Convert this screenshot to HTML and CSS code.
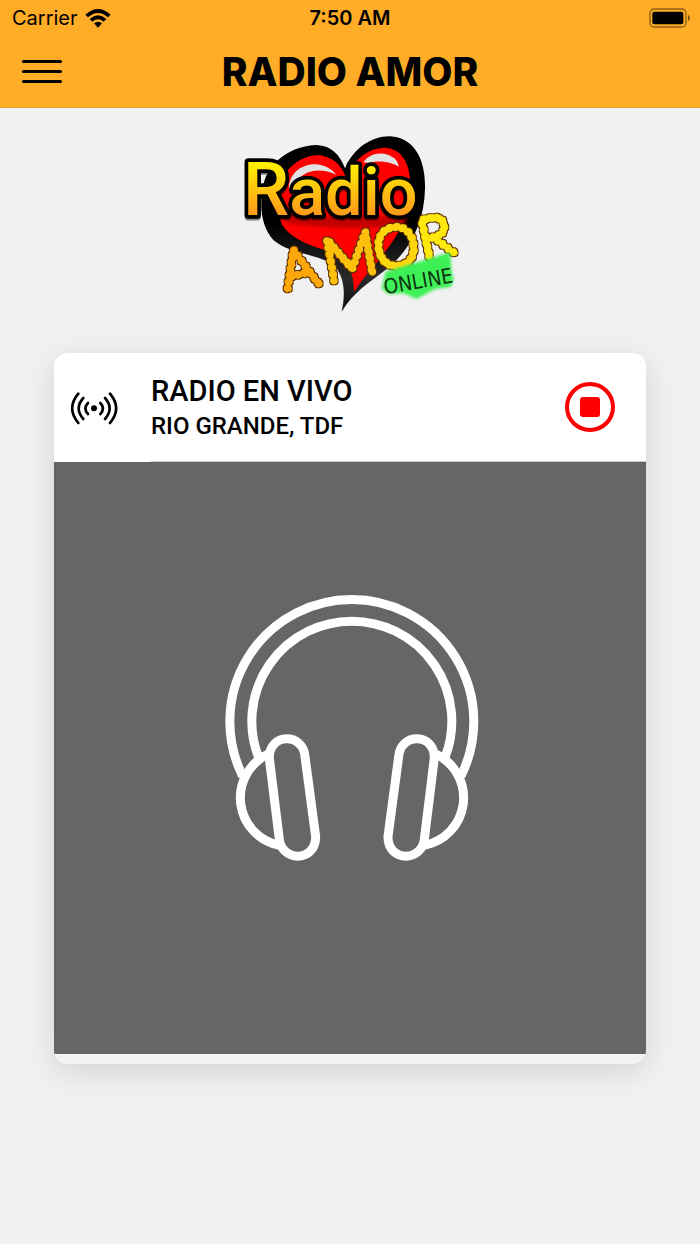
FILE: index.html
```html
<!DOCTYPE html>
<html lang="es">
<head>
    <meta charset="UTF-8">
    <meta name="viewport" content="width=device-width, initial-scale=1.0">
    <title>Radio Amor</title>
    <link rel="stylesheet" href="styles.css">
</head>
<body>

    <header class="header">
        <div class="status-bar">
            <div class="carrier">
                <span>Carrier</span>
                <svg class="wifi" viewBox="0 0 78 57" aria-hidden="true">
                    <path d="M1 17 Q39 -17 77 17 L69 25 Q39 -1 9 25 Z"/>
                    <path d="M14 30 Q39 8 64 30 L56 38 Q39 24 22 38 Z"/>
                    <path d="M27 43 Q39 33 51 43 L39 56 Z"/>
                </svg>
            </div>
            <span class="time">7:50 AM</span>
            <svg class="battery" viewBox="0 0 126 60" aria-hidden="true">
                <rect x="3" y="3" width="108" height="54" rx="13" fill="none" stroke="#000" stroke-opacity=".45" stroke-width="4"/>
                <rect x="10" y="11" width="93" height="38" rx="6"/>
                <path d="M117 20 Q123 24 123 30 Q123 36 117 40 Z" fill-opacity=".5"/>
            </svg>
        </div>
        <div class="toolbar">
            <button class="menu-btn" type="button" aria-label="Menu">
                <span></span>
                <span></span>
                <span></span>
            </button>
            <h1>RADIO AMOR</h1>
        </div>
    </header>

    <main>
        <!-- Station logo -->
        <svg class="logo" viewBox="0 0 690 585" role="img" aria-label="Radio Amor Online">
            <defs>
                <linearGradient id="gold" x1="0" y1="0" x2="0" y2="1">
                    <stop offset="0.2" stop-color="#fff000"/>
                    <stop offset="0.6" stop-color="#ffb414"/>
                    <stop offset="0.9" stop-color="#ff8a1c"/>
                </linearGradient>
                <linearGradient id="rim" x1="0" y1="0" x2="0" y2="1">
                    <stop offset="0.5" stop-color="#000"/>
                    <stop offset="0.8" stop-color="#2a2a2a"/>
                    <stop offset="1" stop-color="#111"/>
                </linearGradient>
                <filter id="soft" x="-20%" y="-30%" width="140%" height="160%">
                    <feGaussianBlur stdDeviation="5"/>
                </filter>
                <!-- brown edge behind the beads -->
                <filter id="edge" x="-10%" y="-10%" width="120%" height="120%">
                    <feMorphology in="SourceAlpha" operator="dilate" radius="4" result="fat"/>
                    <feFlood flood-color="#5a2c00"/>
                    <feComposite in2="fat" operator="in" result="brown"/>
                    <feMerge>
                        <feMergeNode in="brown"/>
                        <feMergeNode in="SourceGraphic"/>
                    </feMerge>
                </filter>
            </defs>

            <!-- heart -->
            <path fill="url(#rim)" d="M330 130 C355 70 410 33 465 34 C535 37 572 100 570 190 C568 300 520 380 455 432 C405 472 355 500 320 560 C332 505 330 450 290 415 C235 385 160 385 115 345 C78 305 72 240 85 180 C100 110 170 62 245 60 C290 62 315 90 330 130 Z"/>
            <path fill="#f00" d="M335 165 C350 110 395 68 450 68 C510 72 530 130 525 200 C518 300 470 355 435 400 C410 435 385 455 357 502 C358 450 340 405 300 385 C240 365 175 350 142 300 C118 250 115 190 150 145 C180 105 225 85 262 92 C305 102 325 130 335 165 Z"/>
            <path fill="#a00000" opacity=".6" filter="url(#soft)" d="M150 275 H520 L510 300 Q320 320 155 295 Z"/>
            <path fill="#e2e2e2" d="M162 192 C160 150 195 118 240 118 C270 119 290 132 303 149 C270 134 235 132 208 148 C190 160 175 176 172 192 Z"/>
            <path fill="#e2e2e2" d="M385 112 C400 90 425 82 450 87 C475 93 489 105 491 125 C470 112 435 104 402 114 Z"/>

            <!-- lettering -->
            <text class="logo-radio" x="24" y="271"><tspan class="logo-cap">R</tspan>adio</text>
            <g class="logo-amor" filter="url(#edge)">
                <text stroke="#ffa80c" transform="translate(152 500) rotate(-14)">A</text>
                <text class="wide" stroke="#ffc00e" transform="translate(276 470) rotate(-10)">M</text>
                <text stroke="#ffd60e" transform="translate(428 432) rotate(-9)">O</text>
                <text stroke="#ffe80e" transform="translate(564 402) rotate(-12)">R</text>
            </g>
            <path fill="#3cf055" filter="url(#soft)" d="M440 490 L452 440 L500 425 L560 408 L645 382 L650 440 L656 462 L648 486 L600 492 L545 522 L505 505 L460 508 Z"/>
            <text class="logo-online" transform="translate(450 508) rotate(-10)">ONLINE</text>
        </svg>

        <section class="card">
            <div class="card-header">
                <svg class="live" viewBox="90 150 144 108" aria-hidden="true">
                    <circle cx="162" cy="205" r="9"/>
                    <g fill="none" stroke="#000" stroke-width="8" stroke-linecap="round">
                        <path d="M144 189 Q128 205 144 222"/>
                        <path d="M130 174 Q102 205 130 237"/>
                        <path d="M115 161 Q78 205 115 249"/>
                        <path d="M181 189 Q197 205 181 222"/>
                        <path d="M195 174 Q223 205 195 237"/>
                        <path d="M210 161 Q247 205 210 249"/>
                    </g>
                </svg>
                <div class="card-info">
                    <div class="station">
                        <h2>RADIO EN VIVO</h2>
                        <p>RIO GRANDE, TDF</p>
                    </div>
                    <button class="stop-btn" type="button" aria-label="Stop"><span></span></button>
                </div>
            </div>
            <!-- Cover -->
            <svg class="cover" viewBox="0 0 592 592" aria-hidden="true">
                <g transform="translate(161 123) scale(.3333)" fill="none" stroke="#fff" stroke-width="27">
                    <path d="M83 573 A366 366 0 1 1 738 573"/>
                    <path d="M130 515 A300 300 0 1 1 691 515"/>
                    <path d="M158 508 A145 145 0 0 0 194 781"/>
                    <path d="M664 508 A145 145 0 0 1 628 781"/>
                    <path d="M163 520 C161 443 265 443 270 515 L302 755 C303 833 195 833 192 755 Z"/>
                    <path d="M658 520 C660 443 556 443 551 515 L519 755 C518 833 626 833 629 755 Z"/>
                </g>
            </svg>
        </section>
    </main>

</body>
</html>
```

FILE: styles.css
```css
* {
    box-sizing: border-box;
}
body {
    margin: 0;
    min-height: 100vh;
    font-family: Roboto, "Liberation Sans", sans-serif;
    background-color: #f1f1f1;
    color: #000;
}
h1, h2, p {
    margin: 0;
}
button {
    padding: 0;
    border: none;
    background: none;
    cursor: pointer;
}

/* Header */
.header {
    background-color: #ffad26;
    border-bottom: 1px solid #e2a034;
    font-family: Inter, "Liberation Sans", sans-serif;
}
.status-bar {
    display: grid;
    grid-template-columns: 1fr auto 1fr;
    align-items: center;
    height: 36px;
    padding: 0 9px;
    font-size: 20px;
}
.carrier {
    display: flex;
    align-items: center;
    gap: 7px;
    padding-left: 3px;
}
.wifi {
    width: 26px;
    height: 19px;
}
.time {
    font-weight: 600;
}
.battery {
    width: 42px;
    height: 20px;
    justify-self: end;
}
.toolbar {
    display: grid;
    grid-template-columns: 1fr auto 1fr;
    align-items: center;
    height: 71px;
    padding: 0 22px;
}
.menu-btn {
    display: flex;
    flex-direction: column;
    gap: 7px;
    width: 40px;
}
.menu-btn span {
    height: 3px;
    border-radius: 2px;
    background-color: #000;
}
h1 {
    font-size: 39px;
    line-height: 44px;
    font-weight: 800;
}

/* Logo */
.logo {
    display: block;
    width: 230px;
    margin: 17px auto 33px;
}
.logo-radio {
    font-family: Roboto, sans-serif;
    font-size: 200px;
    font-weight: 500;
    fill: url(#gold);
    stroke: #000;
    stroke-width: 22px;
    stroke-linejoin: round;
    paint-order: stroke;
    filter: drop-shadow(0 5px 2px rgba(0, 0, 0, 0.5));
}
.logo-cap {
    font-size: 220px;
}
/* letters strung with beads */
.logo-amor {
    font-family: Lato, sans-serif;
    font-size: 166px;
    font-weight: 100;
    fill: none;
    stroke-width: 22px;
    stroke-linecap: round;
    stroke-dasharray: 0 20;
}
.logo-amor .wide {
    font-size: 180px;
}
.logo-online {
    font-family: "DejaVu Sans Condensed", "DejaVu Sans", sans-serif;
    font-size: 62px;
    fill: #0d3312;
}

/* Player card */
.card {
    margin: 0 54px 54px;
    padding-bottom: 10px;
    border-radius: 14px;
    overflow: hidden;
    background-color: #f4f2f4;
    box-shadow: 0 8px 32px rgba(0, 0, 0, 0.12);
}
.card-header {
    display: flex;
    align-items: center;
    height: 109px;
    padding-left: 16px;
    background-color: #fff;
}
.live {
    width: 48px;
    height: 36px;
    margin-right: 33px;
}
.card-info {
    display: flex;
    flex: 1;
    align-items: center;
    justify-content: space-between;
    height: 100%;
    padding-right: 31px;
    border-bottom: 1px solid #c8c7cc;
}
.station {
    padding-top: 2px;
}
h2 {
    font-size: 29px;
    line-height: 36px;
    font-weight: 500;
}
.card-info p {
    font-size: 24px;
    line-height: 34px;
    font-weight: 500;
}
.stop-btn {
    display: flex;
    align-items: center;
    justify-content: center;
    width: 50px;
    height: 50px;
    border: 4px solid #f00;
    border-radius: 50%;
}
.stop-btn span {
    width: 20px;
    height: 20px;
    border-radius: 3px;
    background-color: #f00;
}
.cover {
    display: block;
    width: 100%;
    background-color: #666;
}
```
